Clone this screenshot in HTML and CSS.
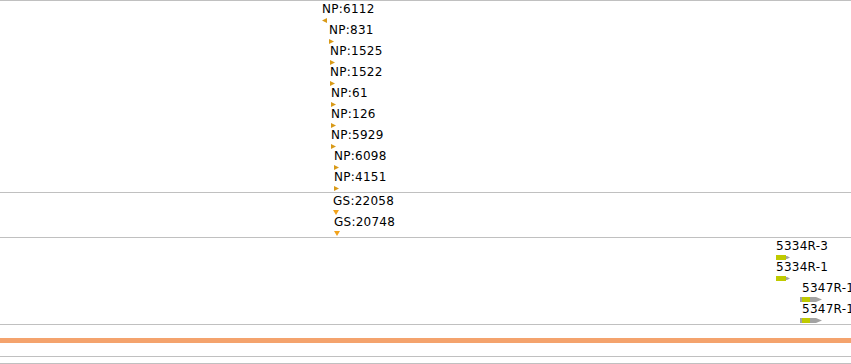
FILE: index.html
```html
<!DOCTYPE html>
<html>

<head>
    <title>tracks</title>
    <link rel="stylesheet" href="styles.css">
</head>

<body>
    <div class="track track-np">
        <div class="feature" style="left: 322px; top: 0px;">
            <span class="label">NP:6112</span>
            <svg class="mark" width="5" height="5"><polygon class="np" points="5,0 5,5 0,2.5"/></svg>
        </div>
        <div class="feature" style="left: 329px; top: 21px;">
            <span class="label">NP:831</span>
            <svg class="mark" width="5" height="5"><polygon class="np" points="0,0 0,5 5,2.5"/></svg>
        </div>
        <div class="feature" style="left: 330px; top: 42px;">
            <span class="label">NP:1525</span>
            <svg class="mark" width="5" height="5"><polygon class="np" points="0,0 0,5 5,2.5"/></svg>
        </div>
        <div class="feature" style="left: 330px; top: 63px;">
            <span class="label">NP:1522</span>
            <svg class="mark" width="5" height="5"><polygon class="np" points="0,0 0,5 5,2.5"/></svg>
        </div>
        <div class="feature" style="left: 331px; top: 84px;">
            <span class="label">NP:61</span>
            <svg class="mark" width="5" height="5"><polygon class="np" points="0,0 0,5 5,2.5"/></svg>
        </div>
        <div class="feature" style="left: 331px; top: 105px;">
            <span class="label">NP:126</span>
            <svg class="mark" width="5" height="5"><polygon class="np" points="0,0 0,5 5,2.5"/></svg>
        </div>
        <div class="feature" style="left: 331px; top: 126px;">
            <span class="label">NP:5929</span>
            <svg class="mark" width="5" height="5"><polygon class="np" points="0,0 0,5 5,2.5"/></svg>
        </div>
        <div class="feature" style="left: 334px; top: 147px;">
            <span class="label">NP:6098</span>
            <svg class="mark" width="5" height="5"><polygon class="np" points="0,0 0,5 5,2.5"/></svg>
        </div>
        <div class="feature" style="left: 334px; top: 168px;">
            <span class="label">NP:4151</span>
            <svg class="mark" width="5" height="5"><polygon class="np" points="0,0 0,5 5,2.5"/></svg>
        </div>
    </div>
    <div class="track track-gs">
        <div class="feature" style="left: 333px; top: 0px;">
            <span class="label">GS:22058</span>
            <svg class="mark" width="6" height="5"><polygon class="gs" points="0,0 6,0 3,5"/></svg>
        </div>
        <div class="feature" style="left: 334px; top: 21px;">
            <span class="label">GS:20748</span>
            <svg class="mark" width="6" height="5"><polygon class="gs" points="0,0 6,0 3,5"/></svg>
        </div>
    </div>
    <div class="track track-rna">
        <div class="feature" style="left: 776px; top: 0px;">
            <span class="label">5334R-3</span>
            <svg class="mark" width="14" height="5">
                <polygon class="grey" points="9,1 11,1 14,2.5 11,4 9,4"/>
                <rect class="green" x="0" y="0" width="10" height="5"/>
            </svg>
        </div>
        <div class="feature" style="left: 776px; top: 21px;">
            <span class="label">5334R-1</span>
            <svg class="mark" width="14" height="5">
                <polygon class="grey" points="9,1 11,1 14,2.5 11,4 9,4"/>
                <rect class="green" x="0" y="0" width="10" height="5"/>
            </svg>
        </div>
        <div class="feature" style="left: 800px; top: 42px;">
            <span class="label label-in">5347R-1</span>
            <svg class="mark" width="22" height="5">
                <polygon class="grey" points="0,0 16,0 22,2.5 16,5 0,5"/>
                <rect class="green" x="2" y="0" width="8" height="5"/>
            </svg>
        </div>
        <div class="feature" style="left: 800px; top: 63px;">
            <span class="label label-in">5347R-1</span>
            <svg class="mark" width="22" height="5">
                <polygon class="grey" points="0,0 16,0 22,2.5 16,5 0,5"/>
                <rect class="green" x="2" y="0" width="8" height="5"/>
            </svg>
        </div>
    </div>
    <div class="gap"></div>
    <div class="ruler"></div>
    <div class="gap"></div>
    <div class="track track-empty"></div>
    <div class="track track-last"></div>
</body>

</html>
```

FILE: styles.css
```css
* {
    margin: 0;
    padding: 0;
}

body {
    width: 851px;
    height: 364px;
    overflow: hidden;
    background-color: #fff;
    color: #000;
    font-family: "DejaVu Sans", "Liberation Sans", sans-serif;
    font-size: 12px;
}

.track {
    position: relative;
    overflow: hidden;
    border-top: 1px solid #c0c0c0;
}

.track-np {
    height: 191px;
}

.track-gs {
    height: 44px;
}

.track-rna {
    height: 86px;
    border-bottom: 1px solid #c0c0c0;
}

.gap {
    height: 13px;
}

.ruler {
    height: 5px;
    background-color: #f4a36d;
}

.track-empty {
    height: 6px;
}

.track-last {
    height: 0;
}

.feature {
    position: absolute;
    white-space: nowrap;
}

.label {
    display: block;
    height: 14px;
    padding-top: 1px;
    line-height: 14px;
    letter-spacing: 0.25px;
}

.label-in {
    padding-left: 2px;
}

.mark {
    display: block;
    margin-top: 2px;
}

.np {
    fill: #d89a18;
}

.gs {
    fill: #f2a31c;
}

.green {
    fill: #bfca00;
}

.grey {
    fill: #a3a3a3;
}
```
